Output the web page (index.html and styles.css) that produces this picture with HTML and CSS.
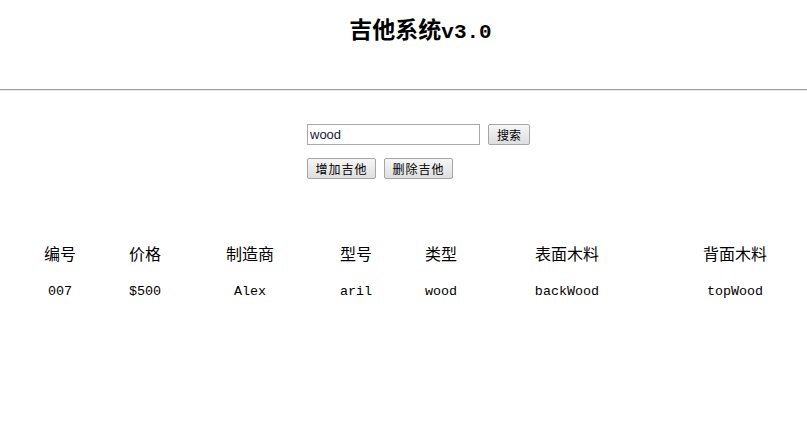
FILE: index.html
```html
<!DOCTYPE html>
<html lang="zh">
<head>
<meta charset="utf-8">
<title>吉他系统v3.0</title>
<link rel="stylesheet" href="styles.css">
</head>
<body>
<header class="top">
  <h1 class="title">吉他系统<span class="ver">v3.0</span></h1>
</header>
<hr class="rule">
<section class="controls">
  <div class="row">
    <input class="search" type="text" value="wood">
    <button class="btn btn-search">搜索</button>
  </div>
  <div class="row row2">
    <button class="btn btn-wide">增加吉他</button>
    <button class="btn btn-wide">删除吉他</button>
  </div>
</section>
<table class="guitars">
  <colgroup>
    <col class="c1"><col class="c2"><col class="c3"><col class="c4"><col class="c5"><col class="c6"><col class="c7">
  </colgroup>
  <thead>
    <tr><th>编号</th><th>价格</th><th>制造商</th><th>型号</th><th>类型</th><th>表面木料</th><th>背面木料</th></tr>
  </thead>
  <tbody>
    <tr><td>007</td><td>$500</td><td>Alex</td><td>aril</td><td>wood</td><td>backWood</td><td>topWood</td></tr>
  </tbody>
</table>
</body>
</html>
```
FILE: styles.css
```css
html, body {
  margin: 0;
  padding: 0;
  background: #fff;
  color: #000;
}
body {
  font-family: "Noto Sans CJK SC", sans-serif;
}
.top {
  height: 89px;
  box-sizing: border-box;
  padding-top: 14px;
  padding-left: 34px;
  text-align: center;
}
.title {
  margin: 0;
  font-family: "Noto Sans CJK SC", serif;
  font-size: 23px;
  font-weight: 700;
  line-height: 28px;
  letter-spacing: 0;
}
.ver {
  font-family: "Liberation Mono", monospace;
  font-size: 21px;
  font-weight: 700;
}
.rule {
  margin: 0;
  height: 0;
  border: 0;
  border-top: 1px solid #9c9c9c;
  border-bottom: 1px solid #e8e8e8;
}
.controls {
  margin-left: 307px;
  padding-top: 33px;
}
.row {
  display: flex;
  gap: 8px;
  height: 21px;
}
.row2 {
  margin-top: 13px;
}
.search {
  box-sizing: border-box;
  width: 173px;
  height: 21px;
  margin: 0;
  padding: 0 2px;
  border: 1px solid #a9a9a9;
  font-family: "Liberation Sans", sans-serif;
  font-size: 13px;
  color: #1a1a40;
  outline: none;
}
.btn {
  box-sizing: border-box;
  height: 21px;
  margin: 0;
  padding: 0;
  border: 1px solid #a6a6a6;
  border-radius: 2px;
  background: linear-gradient(#f6f6f6, #dedede);
  font-family: "Noto Sans CJK SC", sans-serif;
  font-size: 12px;
  line-height: 19px;
  color: #000;
}
.btn-search {
  width: 42px;
}
.btn-wide {
  width: 69px;
  letter-spacing: 1px;
}
.guitars {
  margin-top: 59px;
  margin-left: 29px;
  width: 778px;
  table-layout: fixed;
  border-collapse: collapse;
}
.c1 { width: 62px; }
.c2 { width: 108px; }
.c3 { width: 102px; }
.c4 { width: 110px; }
.c5 { width: 60px; }
.c6 { width: 192px; }
.c7 { width: 144px; }
.guitars th {
  font-weight: 400;
  font-size: 16px;
  height: 30px;
  padding: 0;
  text-align: center;
}
.guitars td {
  font-family: "Liberation Mono", monospace;
  font-size: 13.4px;
  font-weight: 400;
  height: 46px;
  padding: 0;
  text-align: center;
}
```
